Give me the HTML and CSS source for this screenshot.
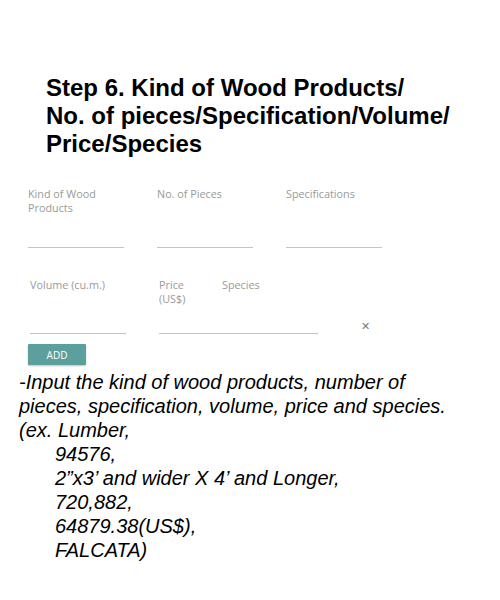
FILE: index.html
```html
<!DOCTYPE html>
<html>
<head>
<meta charset="utf-8">
<link rel="stylesheet" href="styles.css">
</head>
<body>
<div class="page">
  <h1 class="title">Step 6. Kind of Wood Products/<br>No. of pieces/Specification/Volume/<br>Price/Species</h1>
  <div class="form">
    <div class="row row1">
      <div class="field">
        <div class="label">Kind of Wood<br>Products</div>
        <div class="line"></div>
      </div>
      <div class="field">
        <div class="label">No. of Pieces</div>
        <div class="line"></div>
      </div>
      <div class="field">
        <div class="label">Specifications</div>
        <div class="line"></div>
      </div>
    </div>
    <div class="row row2">
      <div class="field">
        <div class="label">Volume (cu.m.)</div>
        <div class="line"></div>
      </div>
      <div class="field wide">
        <div class="labels">
          <div class="label price">Price<br>(US$)</div>
          <div class="label">Species</div>
        </div>
        <div class="line"></div>
      </div>
      <div class="close">&#x2715;</div>
    </div>
    <button class="add">ADD</button>
  </div>
  <div class="desc">
    <p>-Input the kind of wood products, number of<br>pieces, specification, volume, price and species.<br>(ex. Lumber,</p>
    <p class="indent">94576,<br>2”x3’ and wider X 4’ and Longer,<br>720,882,<br>64879.38(US$),<br>FALCATA)</p>
  </div>
</div>
</body>
</html>
```
FILE: styles.css
```css
html, body {
  margin: 0;
  padding: 0;
  background: #ffffff;
}
.page {
  width: 500px;
  height: 600px;
  box-sizing: border-box;
  padding-top: 74px;
}
.title {
  margin: 0 0 0 46px;
  font-family: "Liberation Sans", Arial, sans-serif;
  font-weight: bold;
  font-size: 24px;
  line-height: 28px;
  color: #000;
}
.form {
  padding: 29px 0 0 28px;
  font-family: "Open Sans", "Noto Sans", sans-serif;
}
.row {
  display: flex;
}
.field {
  width: 96px;
  margin-right: 33px;
  display: flex;
  flex-direction: column;
  justify-content: space-between;
}
.label {
  font-size: 10.8px;
  line-height: 13.5px;
  color: #9a9a9a;
  white-space: nowrap;
}
.line {
  height: 1px;
  background: #c4c4c4;
}
.row1 .field {
  height: 61px;
}
.row2 {
  margin-top: 30px;
  padding-left: 2px;
  align-items: flex-start;
}
.row2 .field {
  height: 56px;
}
.row2 .field.wide {
  width: 159px;
  margin-right: 0;
}
.labels {
  display: flex;
}
.labels .price {
  width: 63px;
}
.close {
  margin-left: 43px;
  margin-top: 42px;
  font-size: 11px;
  color: #7a7a7a;
  line-height: 12px;
}
.add {
  display: block;
  margin-top: 10px;
  margin-left: 0;
  width: 58px;
  height: 21px;
  border: none;
  border-radius: 1px;
  background: #5d9f9c;
  color: #fff;
  font-family: "Open Sans", "Noto Sans", sans-serif;
  font-size: 10px;
  padding: 0;
  box-shadow: 0 1px 2px rgba(0,0,0,0.25);
}
.desc {
  margin-left: 19px;
  margin-top: 5px;
  font-family: "Liberation Sans", Arial, sans-serif;
  font-style: italic;
  font-size: 20px;
  line-height: 24px;
  color: #000;
}
.desc p {
  margin: 0;
}
.desc .indent {
  padding-left: 36px;
}
```
